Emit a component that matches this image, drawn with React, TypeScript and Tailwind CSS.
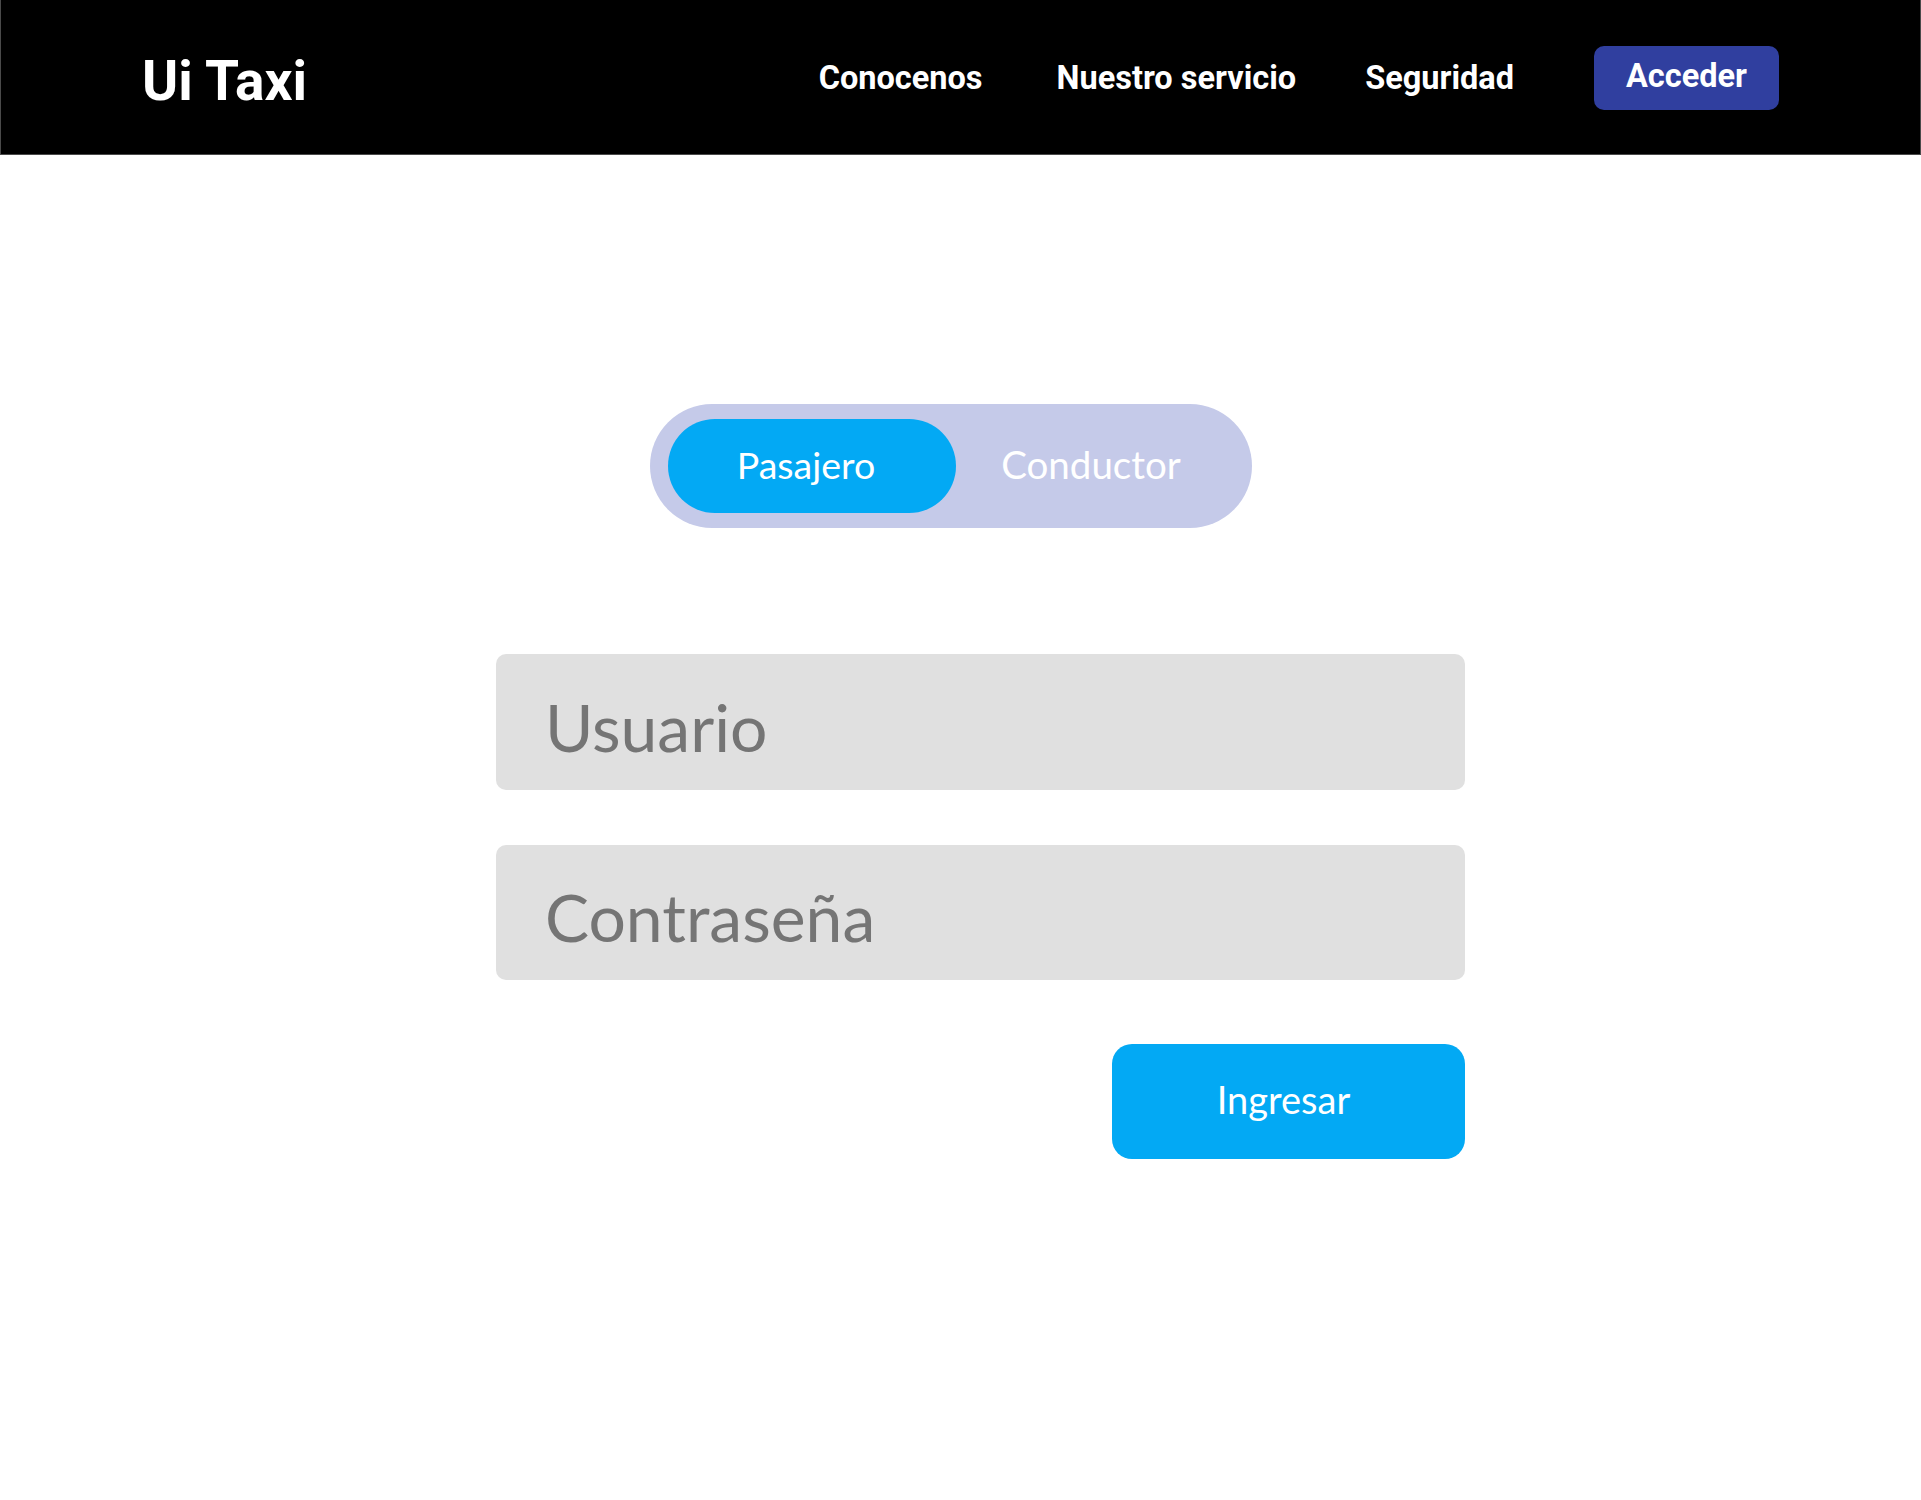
import { useState } from "react";

const Navbar = () => {
    return (
        <div className="flex h-[155px] w-full items-center justify-between border-x border-b border-[#4a4a4a] bg-black px-[141px] font-['Roboto',sans-serif]">
            <p className="pt-[8px] text-[55px] font-bold leading-none text-white">Ui Taxi</p>
            <div className="flex items-center pt-[2px]">
                <a className="text-[32.5px] font-bold text-white">Conocenos</a>
                <a className="ml-[74px] text-[32.5px] font-bold text-white">Nuestro servicio</a>
                <a className="ml-[69px] text-[32.5px] font-bold text-white">Seguridad</a>
                <button className="ml-[80px] flex h-[64px] w-[185px] items-center justify-center rounded-[10px] bg-[#303f9f] pb-[4px] text-[32.5px] font-bold text-white">
                    Acceder
                </button>
            </div>
        </div>
    );
};

const App = () => {
    const [tipo, setTipo] = useState<"pasajero" | "conductor">("pasajero");

    return (
        <div className="min-h-[1500px] w-full bg-white">
            <Navbar />
            <div className="ml-[496px] flex w-[969px] flex-col pt-[249px] font-['Lato',sans-serif]">
                {/* selector pasajero / conductor */}
                <div className="ml-[154px] flex h-[124px] w-[602px] items-center rounded-full bg-[#c5cae9] pl-[18px]">
                    <button
                        onClick={() => setTipo("pasajero")}
                        className={`flex h-[94px] w-[288px] items-center justify-center rounded-full pr-[12px] pb-[2px] text-[37.5px] text-white ${tipo === "pasajero" ? "bg-[#03a9f4]" : "bg-transparent"}`}
                    >
                        Pasajero
                    </button>
                    <button
                        onClick={() => setTipo("conductor")}
                        className={`flex h-[94px] flex-1 items-center justify-center rounded-full pr-[26px] pb-[2px] text-[38.5px] text-white ${tipo === "conductor" ? "bg-[#03a9f4]" : "bg-transparent"}`}
                    >
                        Conductor
                    </button>
                </div>

                <form className="flex flex-col" onSubmit={(e) => e.preventDefault()}>
                    <input
                        type="text"
                        placeholder="Usuario"
                        className="mt-[126px] h-[136px] w-full rounded-[10px] bg-[#e0e0e0] pl-[49px] pt-[8px] text-[66px] text-[#757575] placeholder:text-[#757575] focus:outline-none"
                    />
                    <input
                        type="password"
                        placeholder="Contraseña"
                        className="mt-[55px] h-[135px] w-full rounded-[10px] bg-[#e0e0e0] pl-[49px] pt-[8px] text-[66px] text-[#757575] placeholder:text-[#757575] focus:outline-none"
                    />
                    <button className="mt-[64px] flex h-[115px] w-[353px] items-center justify-center self-end rounded-[20px] bg-[#03a9f4] pr-[10px] pb-[4px] text-[38px] text-white">
                        Ingresar
                    </button>
                </form>
            </div>
        </div>
    );
};

export default App;
